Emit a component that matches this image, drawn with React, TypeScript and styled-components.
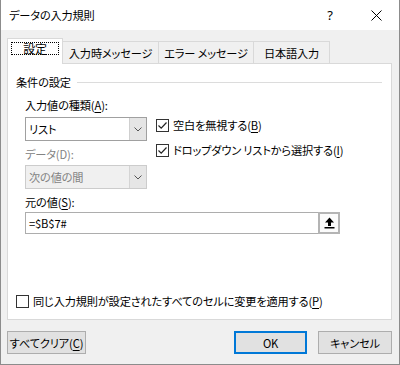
import React from "react";
import styled, { createGlobalStyle } from "styled-components";

const GlobalStyle = createGlobalStyle`
  html, body { margin: 0; padding: 0; background: #f0f0f0; }
  body {
    font-family: "Noto Sans CJK JP", "Noto Sans", sans-serif;
    font-size: 11.2px;
    color: #000;
    font-feature-settings: "palt";
    letter-spacing: -0.15px;
  }
  * { box-sizing: border-box; }
`;

const Window = styled.div`
  width: 400px;
  height: 365px;
  display: flex;
  flex-direction: column;
  background: #f0f0f0;
  border: 1px solid #8c8c8c;
  border-top: none;
`;

const TitleBar = styled.div`
  height: 30px;
  background: #fff;
  display: flex;
  align-items: center;
  padding-left: 8px;
`;

const TitleText = styled.div`
  flex: 1;
  line-height: 16px;
`;

const CaptionButton = styled.div`
  width: 46px;
  height: 30px;
  display: flex;
  align-items: center;
  justify-content: center;
  font-family: "Noto Sans", sans-serif;
  font-size: 13px;
`;

const Body = styled.div`
  flex: 1;
  display: flex;
  flex-direction: column;
  padding: 0 7px 0 6px;
`;

const TabRow = styled.div`
  display: flex;
  align-items: flex-start;
  height: 26px;
  margin-top: 8px;
  margin-bottom: -1px;
  position: relative;
  z-index: 1;
`;

const ActiveTab = styled.div<{ $w: number }>`
  width: ${(p) => p.$w}px;
  height: 26px;
  background: #fff;
  border: 1px solid #d9d9d9;
  border-bottom: none;
  padding: 3px 3px 0 3px;
`;

const FocusLabel = styled.div`
  height: 13px;
  border: 1px dotted #000;
  display: flex;
  align-items: center;
  justify-content: center;
  line-height: 12px;
  font-size: 12px;
`;

const Tab = styled.div<{ $w: number }>`
  width: ${(p) => p.$w}px;
  height: 22px;
  margin-top: 3px;
  margin-left: -1px;
  background: #f0f0f0;
  border: 1px solid #d9d9d9;
  border-bottom: none;
  display: flex;
  align-items: center;
  justify-content: center;
  white-space: nowrap;
`;

const Panel = styled.div`
  height: 257px;
  background: #fff;
  border: 1px solid #d9d9d9;
  display: flex;
  flex-direction: column;
  padding: 10px 8px 10px 8px;
`;

const GroupHeader = styled.div`
  display: flex;
  align-items: center;
  gap: 6px;
  height: 16px;
  line-height: 16px;
`;

const GroupLine = styled.div`
  flex: 1;
  height: 1px;
  background: #dcdcdc;
  margin-right: 1px;
`;

const Indent = styled.div`
  padding-left: 9px;
  display: flex;
  flex-direction: column;
`;

const SettingsRow = styled.div`
  display: flex;
  gap: 9px;
`;

const LeftCol = styled.div`
  width: 122px;
  display: flex;
  flex-direction: column;
`;

const RightCol = styled.div`
  padding-top: 27px;
  display: flex;
  flex-direction: column;
  gap: 9px;
`;

const Label = styled.div<{ $mt: number; $muted?: boolean }>`
  margin-top: ${(p) => p.$mt}px;
  height: 16px;
  line-height: 16px;
  white-space: nowrap;
  color: ${(p) => (p.$muted ? "#838383" : "#000")};
`;

const Combo = styled.div<{ $mt: number; $disabled?: boolean }>`
  margin-top: ${(p) => p.$mt}px;
  height: 24px;
  display: flex;
  border: 1px solid ${(p) => (p.$disabled ? "#cccccc" : "#a0a0a0")};
  background: ${(p) => (p.$disabled ? "#f0f0f0" : "#fff")};
  color: ${(p) => (p.$disabled ? "#838383" : "#000")};
`;

const ComboText = styled.div`
  flex: 1;
  padding-left: 3px;
  line-height: 22px;
`;

const ComboArrow = styled.div<{ $disabled?: boolean }>`
  width: 17px;
  display: flex;
  align-items: center;
  justify-content: center;
  background: ${(p) => (p.$disabled ? "#e6e6e6" : "#e5e5e5")};
  border-left: 1px solid ${(p) => (p.$disabled ? "#d4d4d4" : "#cfcfcf")};
`;

const CheckRow = styled.div`
  height: 16px;
  display: flex;
  align-items: center;
  gap: 4px;
  white-space: nowrap;
  line-height: 16px;
`;

const Box = styled.div`
  width: 13px;
  height: 13px;
  border: 1px solid #333;
  background: #fff;
  display: flex;
  align-items: center;
  justify-content: center;
`;

const SourceBox = styled.div`
  margin-top: 2px;
  width: 315px;
  height: 22px;
  display: flex;
  border: 1px solid #adadad;
  background: #fff;
`;

const SourceText = styled.div`
  flex: 1;
  padding-left: 3px;
  line-height: 20px;
`;

const RefButton = styled.div`
  width: 22px;
  height: 22px;
  margin: -1px -1px -1px 0;
  border: 2px solid #b4b4b4;
  background: #fbfbfb;
  display: flex;
  align-items: center;
  justify-content: center;
`;

const Spacer = styled.div`
  flex: 1;
`;

const Footer = styled.div`
  display: flex;
  align-items: center;
  margin-top: 11px;
  gap: 11px;
`;

const Button = styled.div<{ $w: number; $default?: boolean }>`
  width: ${(p) => p.$w}px;
  height: 23px;
  background: #e1e1e1;
  border: ${(p) => (p.$default ? "2px solid #0078d7" : "1px solid #adadad")};
  display: flex;
  align-items: center;
  justify-content: center;
  white-space: nowrap;
`;

const U = styled.span`
  text-decoration: underline;
  text-underline-offset: 2px;
`;

const Check = () => (
  <svg width="11" height="11" viewBox="0 0 11 11">
    <polyline points="1.5,5.5 4.2,8.2 9.5,2.5" fill="none" stroke="#222" strokeWidth="1.2" />
  </svg>
);

const Chevron = ({ color }: { color: string }) => (
  <svg width="8" height="5" viewBox="0 0 8 5">
    <polyline points="0.5,0.5 4,4 7.5,0.5" fill="none" stroke={color} strokeWidth="1" />
  </svg>
);

const UpArrow = () => (
  <svg width="11" height="12" viewBox="0 0 11 12">
    <polygon points="5.5,0.5 10,5.5 7,5.5 7,9 4,9 4,5.5 1,5.5" fill="#000" />
    <rect x="0.5" y="10" width="10" height="1.5" fill="#000" />
  </svg>
);

const Close = () => (
  <svg width="11" height="11" viewBox="0 0 11 11">
    <line x1="0.5" y1="0.5" x2="10.5" y2="10.5" stroke="#000" strokeWidth="1" />
    <line x1="10.5" y1="0.5" x2="0.5" y2="10.5" stroke="#000" strokeWidth="1" />
  </svg>
);

export default function App() {
  return (
    <>
      <GlobalStyle />
      <Window>
        <TitleBar>
          <TitleText>データの入力規則</TitleText>
          <CaptionButton>?</CaptionButton>
          <CaptionButton>
            <Close />
          </CaptionButton>
        </TitleBar>
        <Body>
          <TabRow>
            <ActiveTab $w={56}>
              <FocusLabel>設定</FocusLabel>
            </ActiveTab>
            <Tab $w={97}>入力時メッセージ</Tab>
            <Tab $w={96}>エラー メッセージ</Tab>
            <Tab $w={77}>日本語入力</Tab>
          </TabRow>
          <Panel>
            <GroupHeader>
              <span>条件の設定</span>
              <GroupLine />
            </GroupHeader>
            <Indent>
              <SettingsRow>
                <LeftCol>
                  <Label $mt={7}>
                    入力値の種類(<U>A</U>):
                  </Label>
                  <Combo $mt={4}>
                    <ComboText>リスト</ComboText>
                    <ComboArrow>
                      <Chevron color="#555" />
                    </ComboArrow>
                  </Combo>
                  <Label $mt={5} $muted>
                    データ(D):
                  </Label>
                  <Combo $mt={3} $disabled>
                    <ComboText>次の値の間</ComboText>
                    <ComboArrow $disabled>
                      <Chevron color="#555" />
                    </ComboArrow>
                  </Combo>
                </LeftCol>
                <RightCol>
                  <CheckRow>
                    <Box>
                      <Check />
                    </Box>
                    <span>
                      空白を無視する(<U>B</U>)
                    </span>
                  </CheckRow>
                  <CheckRow>
                    <Box>
                      <Check />
                    </Box>
                    <span>
                      ドロップダウン リストから選択する(<U>I</U>)
                    </span>
                  </CheckRow>
                </RightCol>
              </SettingsRow>
              <Label $mt={5}>
                元の値(<U>S</U>):
              </Label>
              <SourceBox>
                <SourceText>=$B$7#</SourceText>
                <RefButton>
                  <UpArrow />
                </RefButton>
              </SourceBox>
            </Indent>
            <Spacer />
            <CheckRow>
              <Box />
              <span>
                同じ入力規則が設定されたすべてのセルに変更を適用する(<U>P</U>)
              </span>
            </CheckRow>
          </Panel>
          <Footer>
            <Button $w={79}>
              すべてクリア(<U>C</U>)
            </Button>
            <Spacer />
            <Button $w={73} $default>
              OK
            </Button>
            <Button $w={74}>キャンセル</Button>
          </Footer>
        </Body>
      </Window>
    </>
  );
}
